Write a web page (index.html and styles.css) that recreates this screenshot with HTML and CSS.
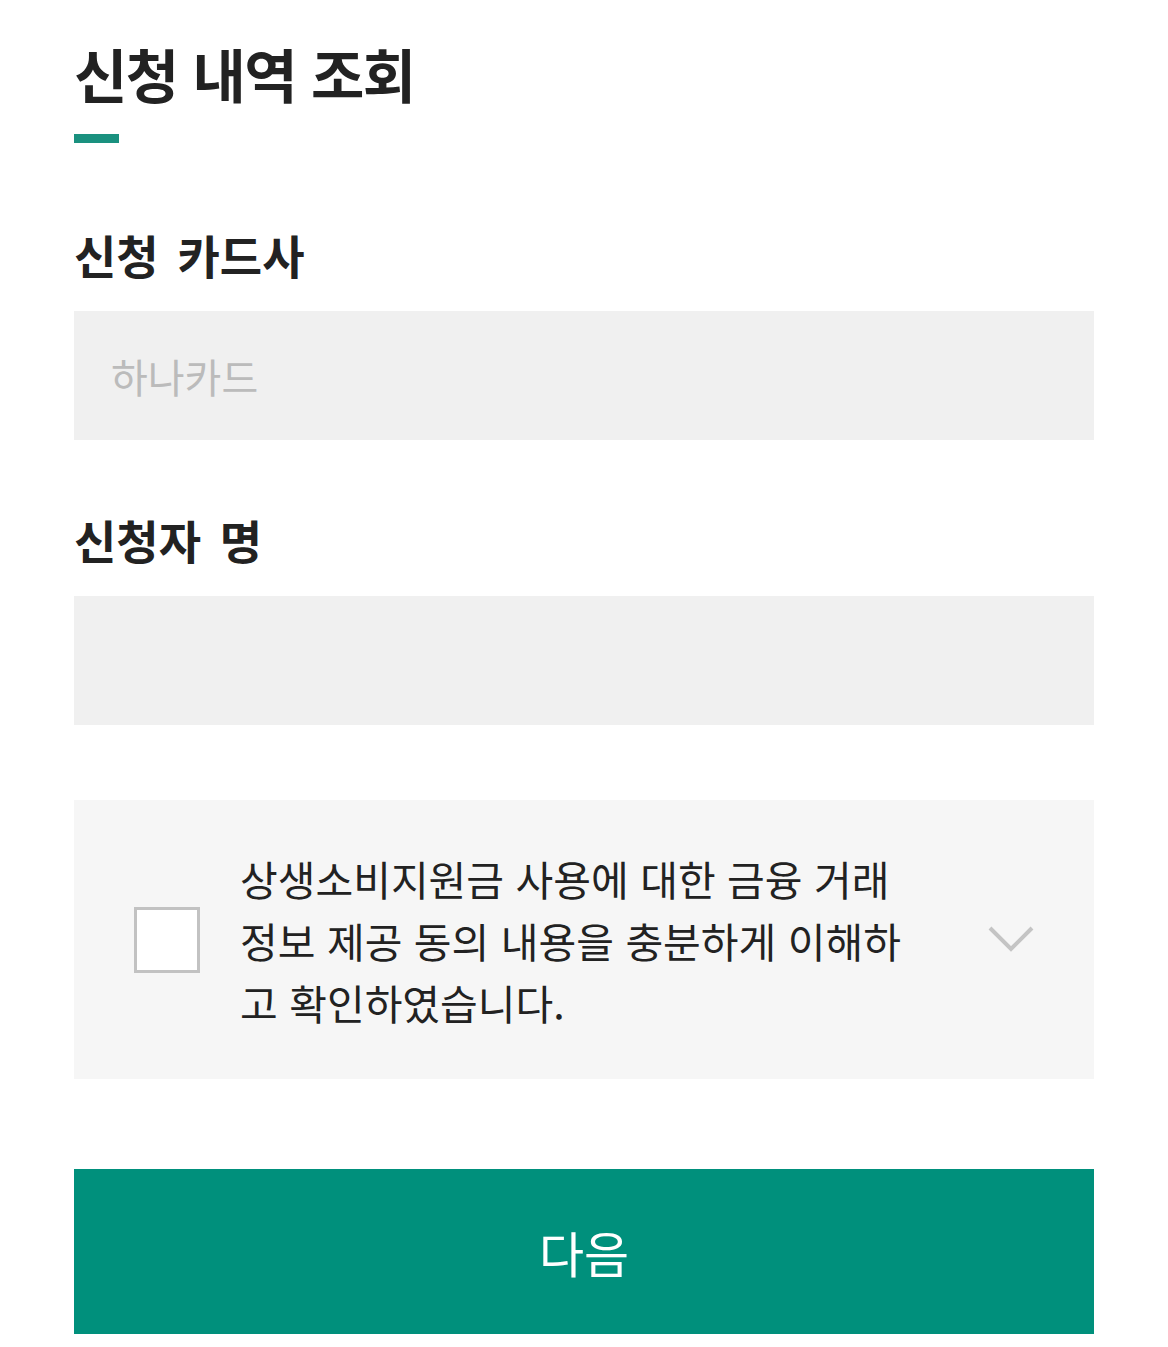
FILE: index.html
```html
<!DOCTYPE html>
<html lang="ko">
<head>
<meta charset="utf-8">
<title>신청 내역 조회</title>
<link rel="stylesheet" href="styles.css">
</head>
<body>
<main class="page">
  <h1 class="title">신청 내역 조회</h1>
  <div class="title-bar"></div>

  <label class="field-label">신청 카드사</label>
  <div class="input"><span class="placeholder">하나카드</span></div>

  <label class="field-label second">신청자 명</label>
  <div class="input"></div>

  <div class="agree">
    <span class="checkbox"></span>
    <p class="agree-text">상생소비지원금 사용에 대한 금융 거래 정보 제공 동의 내용을 충분하게 이해하고 확인하였습니다.</p>
    <svg class="chevron" width="48" height="30" viewBox="0 0 48 30"><polyline points="3,3 24,24 45,3" fill="none" stroke="#c4c4c4" stroke-width="4"/></svg>
  </div>

  <button class="next">다음</button>
</main>
</body>
</html>
```

FILE: styles.css
```css
* { box-sizing: border-box; }
html, body { margin: 0; padding: 0; background: #fff; }
body {
  font-family: "Noto Sans CJK KR", "Noto Sans", sans-serif;
  color: #222;
}
.page {
  width: 1168px;
  padding: 41px 74px 0 74px;
  display: flex;
  flex-direction: column;
}
.title {
  margin: 0;
  font-size: 58px;
  line-height: 65px;
  font-weight: 700;
  letter-spacing: -1.5px;
  color: #222;
}
.title-bar {
  margin-top: 28px;
  width: 45px;
  height: 9px;
  background: #1a917f;
}
.field-label {
  margin-top: 85px;
  font-size: 46px;
  line-height: 52px;
  font-weight: 700;
  color: #222;
  word-spacing: 6px;
}
.field-label.second { margin-top: 73px; }
.input {
  margin-top: 31px;
  height: 129px;
  background: #f0f0f0;
  display: flex;
  align-items: center;
  padding-left: 37px;
}
.placeholder {
  font-size: 40px;
  color: #bbb;
}
.agree {
  margin-top: 75px;
  height: 279px;
  background: #f6f6f6;
  display: flex;
  align-items: center;
  padding: 0 59px 0 60px;
}
.checkbox {
  width: 66px;
  height: 66px;
  border: 3px solid #c2c2c2;
  background: #fff;
  flex: none;
}
.agree-text {
  margin: 0 0 0 40px;
  width: 690px;
  font-size: 41px;
  line-height: 62px;
  color: #222;
}
.chevron {
  margin-left: auto;
  flex: none;
}
.next {
  margin-top: 90px;
  height: 165px;
  border: 0;
  background: #00907c;
  color: #fff;
  font-family: inherit;
  font-size: 49px;
  font-weight: 400;
  padding: 0;
}
```
